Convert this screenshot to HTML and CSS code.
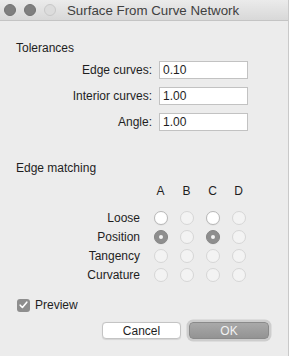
FILE: index.html
```html
<!DOCTYPE html>
<html lang="en">
<head>
    <meta charset="UTF-8">
    <title>Surface From Curve Network</title>
    <link rel="stylesheet" href="styles.css">
</head>
<body>
    <div class="titlebar">
        <div class="lights">
            <span class="light"></span>
            <span class="light"></span>
            <span class="light off"></span>
        </div>
        <div class="title">Surface From Curve Network</div>
    </div>

    <div class="content">
        <div class="section-title">Tolerances</div>
        <div class="fields">
            <label>Edge curves:</label>
            <input type="text" value="0.10">
            <label>Interior curves:</label>
            <input type="text" value="1.00">
            <label>Angle:</label>
            <input type="text" value="1.00">
        </div>

        <div class="section-title matching-title">Edge matching</div>
        <div class="matrix">
            <span class="head"></span>
            <span class="head col-head">A</span>
            <span class="head col-head">B</span>
            <span class="head col-head">C</span>
            <span class="head col-head">D</span>

            <span class="row-label">Loose</span>
            <span class="cell"><span class="radio"></span></span>
            <span class="cell"><span class="radio disabled"></span></span>
            <span class="cell"><span class="radio"></span></span>
            <span class="cell"><span class="radio disabled"></span></span>

            <span class="row-label">Position</span>
            <span class="cell"><span class="radio checked"></span></span>
            <span class="cell"><span class="radio disabled"></span></span>
            <span class="cell"><span class="radio checked"></span></span>
            <span class="cell"><span class="radio disabled"></span></span>

            <span class="row-label">Tangency</span>
            <span class="cell"><span class="radio disabled"></span></span>
            <span class="cell"><span class="radio disabled"></span></span>
            <span class="cell"><span class="radio disabled"></span></span>
            <span class="cell"><span class="radio disabled"></span></span>

            <span class="row-label">Curvature</span>
            <span class="cell"><span class="radio disabled"></span></span>
            <span class="cell"><span class="radio disabled"></span></span>
            <span class="cell"><span class="radio disabled"></span></span>
            <span class="cell"><span class="radio disabled"></span></span>
        </div>

        <div class="preview">
            <span class="checkbox">
                <svg width="9" height="8" viewBox="0 0 9 8"><path d="M1.2 4.2 L3.4 6.5 L7.8 1.2" fill="none" stroke="#fff" stroke-width="1.6" stroke-linecap="round" stroke-linejoin="round"/></svg>
            </span>
            <span>Preview</span>
        </div>

        <div class="buttons">
            <button class="btn">Cancel</button>
            <button class="btn btn-default">OK</button>
        </div>
    </div>
</body>
</html>
```

FILE: styles.css
```css
body {
    margin: 0;
    width: 289px;
    height: 356px;
    background-color: #ececec;
    font-family: 'Liberation Sans', Arial, sans-serif;
    font-size: 12px;
    color: #1e1e1e;
    overflow: hidden;
    box-sizing: border-box;
    border-right: 1px solid #c9c9c9;
}
.titlebar {
    height: 20px;
    display: flex;
    align-items: center;
    background: linear-gradient(#ebebeb, #d8d8d8);
    border-bottom: 1px solid #c4c4c4;
}
.lights {
    display: flex;
    gap: 8px;
    padding-left: 4px;
}
.light {
    box-sizing: border-box;
    width: 12px;
    height: 12px;
    border-radius: 50%;
    background-color: #7f7f7f;
    border: 1px solid #727272;
}
.light.off {
    background-color: #dcdcdc;
    border-color: #c8c8c8;
}
.title {
    margin-left: 11px;
    font-size: 13.3px;
    color: #404040;
    padding-top: 1px;
}
.content {
    padding: 0 19px 0 16px;
}
.section-title {
    line-height: 14px;
    margin-top: 20px;
}
.fields {
    display: grid;
    grid-template-columns: 136px 89px;
    grid-auto-rows: 18px;
    column-gap: 7px;
    row-gap: 8px;
    margin-top: 6px;
    align-items: center;
}
.fields label {
    text-align: right;
}
.fields input {
    box-sizing: border-box;
    width: 89px;
    height: 18px;
    margin: 0;
    padding: 0 3px;
    border: 1px solid #c2c2c2;
    background: #fff;
    font-family: inherit;
    font-size: 12px;
    color: #1e1e1e;
    outline: none;
}
.matching-title {
    margin-top: 30px;
}
.matrix {
    display: grid;
    grid-template-columns: 132px repeat(4, 26px);
    grid-template-rows: 27px repeat(4, 19px);
    margin-top: 6px;
    align-items: center;
}
.head {
    align-self: start;
    line-height: 20px;
}
.col-head {
    text-align: center;
    margin-left: -1px;
}
.row-label {
    text-align: right;
    padding-right: 8px;
}
.cell {
    display: flex;
    justify-content: center;
    align-items: center;
}
.radio {
    box-sizing: border-box;
    width: 14px;
    height: 14px;
    border-radius: 50%;
    background: #fff;
    border: 1px solid #b8b8b8;
    box-shadow: 0 0.5px 1px rgba(0,0,0,0.08);
}
.radio.disabled {
    background: #f3f3f3;
    border-color: #d6d6d6;
    box-shadow: none;
}
.radio.checked {
    background: #8e8e8e;
    border-color: #858585;
    display: flex;
    align-items: center;
    justify-content: center;
}
.radio.checked::after {
    content: "";
    width: 4px;
    height: 4px;
    border-radius: 50%;
    background: #f4f4f4;
}
.preview {
    display: flex;
    align-items: center;
    gap: 5px;
    margin-top: 14px;
    padding-left: 1px;
    height: 14px;
}
.checkbox {
    width: 13px;
    height: 13px;
    border-radius: 3px;
    background: #8e8e8e;
    display: flex;
    align-items: center;
    justify-content: center;
}
.buttons {
    display: flex;
    justify-content: flex-end;
    gap: 8px;
    margin-top: 10px;
}
.btn {
    box-sizing: border-box;
    width: 79px;
    height: 17px;
    margin: 0;
    padding: 0;
    border: 1px solid #c4c4c4;
    border-radius: 4px;
    background: #fff;
    font-family: inherit;
    font-size: 12px;
    color: #1e1e1e;
    box-shadow: 0 0.5px 1px rgba(0,0,0,0.1);
}
.btn-default {
    width: 80px;
    background: linear-gradient(#a9a9a9, #939393);
    border-color: #8a8a8a;
    color: #f2f2f2;
    box-shadow: 0 0 0 2.5px #cdcdcd;
}
```
